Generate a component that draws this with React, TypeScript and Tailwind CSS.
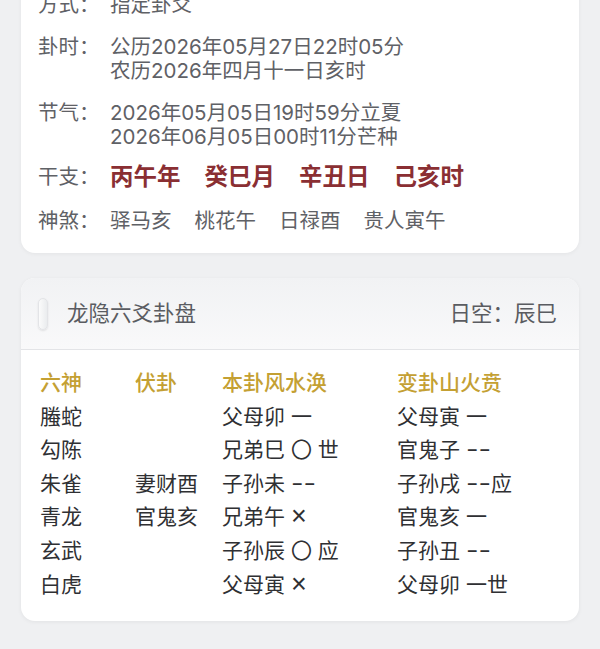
import React from "react";

const font = { fontFamily: 'Inter, "Noto Sans CJK SC", "Noto Sans", sans-serif' };

const infoRows: { label: string; lines: string[] }[] = [
  { label: "方式：", lines: ["指定卦爻"] },
  { label: "卦时：", lines: ["公历2026年05月27日22时05分", "农历2026年四月十一日亥时"] },
  { label: "节气：", lines: ["2026年05月05日19时59分立夏", "2026年06月05日00时11分芒种"] },
];

const ganzhi = ["丙午年", "癸巳月", "辛丑日", "己亥时"];
const shensha = ["驿马亥", "桃花午", "日禄酉", "贵人寅午"];

// 一 阳爻, -- 阴爻, 〇 老阳动, × 老阴动
const rows = [
  ["螣蛇", "", "父母卯 一", "父母寅 一"],
  ["勾陈", "", "兄弟巳 〇 世", "官鬼子 --"],
  ["朱雀", "妻财酉", "子孙未 --", "子孙戌 --应"],
  ["青龙", "官鬼亥", "兄弟午 ×", "官鬼亥 一"],
  ["玄武", "", "子孙辰 〇 应", "子孙丑 --"],
  ["白虎", "", "父母寅 ×", "父母卯 一世"],
];

function Cell({ text }: { text: string }) {
  // yin line and moving-yin cross are drawn a bit wider/thinner, like the original
  const parts = text.split(/(--|×)/);
  return (
    <div className="whitespace-pre">
      {parts.map((p, i) => {
        if (p === "--")
          return (
            <span key={i} className="inline-block w-[25px]">
              <span className="inline-block origin-left scale-x-130">--</span>
            </span>
          );
        if (p === "×")
          return (
            <span key={i} className="inline-block align-top font-['Liberation_Sans'] text-[27px] leading-[32px]">
              ×
            </span>
          );
        return <React.Fragment key={i}>{p}</React.Fragment>;
      })}
    </div>
  );
}

function InfoCard() {
  return (
    <div className="mx-[21px] -mt-[27px] rounded-b-[14px] bg-white px-[17px] pt-[20px] pb-[20px] shadow-[0_1px_4px_rgba(0,0,0,0.05)]">
      <div className="flex flex-col gap-[18px] text-[20.5px] leading-[24px] text-[#5f6166]">
        {infoRows.map((r) => (
          <div key={r.label} className="flex">
            <div className="w-[72px] shrink-0">{r.label}</div>
            <div className="flex flex-col">
              {r.lines.map((l) => (
                <div key={l}>{l}</div>
              ))}
            </div>
          </div>
        ))}
        <div className="-mt-[2px] mb-[2px] flex items-center">
          <div className="w-[72px] shrink-0">干支：</div>
          <div className="flex gap-[24px] text-[23.5px] font-bold text-[#8a2f33]">
            {ganzhi.map((g) => (
              <span key={g}>{g}</span>
            ))}
          </div>
        </div>
        <div className="flex">
          <div className="w-[72px] shrink-0">神煞：</div>
          <div className="flex gap-[23px]">
            {shensha.map((s) => (
              <span key={s}>{s}</span>
            ))}
          </div>
        </div>
      </div>
    </div>
  );
}

function PanCard() {
  return (
    <div className="mx-[21px] mt-[25px] overflow-hidden rounded-[14px] bg-white shadow-[0_1px_4px_rgba(0,0,0,0.06)]">
      <div className="flex h-[72px] items-center border-b border-[#e3e4e7] bg-gradient-to-b from-[#f1f2f4] to-[#f9f9fa] pr-[22px] pl-[17px]">
        <div className="h-[32px] w-[10px] rounded-full border border-[#e3e4e7] bg-gradient-to-r from-[#fbfbfb] to-[#eaecee] shadow-[0_1px_2px_rgba(0,0,0,0.1)]" />
        <div className="ml-[19px] text-[21.5px] text-[#5a5c61]">龙隐六爻卦盘</div>
        <div className="ml-auto text-[21.5px] text-[#5a5c61]">日空：辰巳</div>
      </div>
      <div className="pt-[16px] pb-[20px] pl-[19px] text-[21px] leading-[33.6px]">
        <div className="grid grid-cols-[95px_87px_175px_1fr] font-medium text-[#c4a033]">
          <div>六神</div>
          <div>伏卦</div>
          <div>本卦风水涣</div>
          <div>变卦山火贲</div>
        </div>
        {rows.map((r, i) => (
          <div key={i} className="grid h-[33.6px] grid-cols-[95px_87px_175px_1fr] text-[#2f3033]">
            {r.map((c, j) => (
              <Cell key={j} text={c} />
            ))}
          </div>
        ))}
      </div>
    </div>
  );
}

export default function App() {
  return (
    <div className="min-h-[649px] overflow-hidden bg-[#eff0f2] pb-[28px]" style={font}>
      <InfoCard />
      <PanCard />
    </div>
  );
}
